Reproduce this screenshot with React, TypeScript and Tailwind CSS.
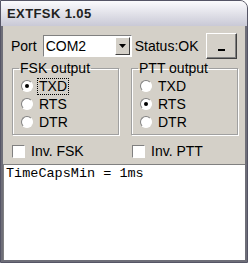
import React from "react";

function Radio({ checked, label, focused }: { checked?: boolean; label: string; focused?: boolean }) {
  return (
    <div className="flex h-[18px] items-center">
      <span className="relative ml-[7px] h-[12px] w-[12px] rounded-full border border-t-[#808080] border-l-[#808080] border-r-white border-b-white bg-white">
        {checked && <span className="absolute left-[3px] top-[3px] h-[4px] w-[4px] rounded-full bg-black" />}
      </span>
      <span
        className={
          "ml-[4px] px-[1px] leading-[15px] " +
          (focused ? "border border-dotted border-black" : "border border-transparent")
        }
      >
        {label}
      </span>
    </div>
  );
}

function Group({ title, selected, focusFirst }: { title: string; selected: number; focusFirst?: boolean }) {
  const items = ["TXD", "RTS", "DTR"];
  return (
    <fieldset className="h-[74px] w-[107px] border border-[#a0a0a0] px-[1px] pb-[2px] pt-0 shadow-[inset_1px_1px_0_white,1px_1px_0_white]">
      <legend className="ml-[5px] px-[1px] leading-[14px]">{title}</legend>
      <div className="mt-[2px]">
        {items.map((it, i) => (
          <Radio key={it} label={it} checked={i === selected} focused={focusFirst && i === 0} />
        ))}
      </div>
    </fieldset>
  );
}

function Check({ label }: { label: string }) {
  return (
    <div className="flex items-center">
      <span className="h-[13px] w-[13px] border border-t-[#808080] border-l-[#808080] border-r-white border-b-white bg-white" />
      <span className="ml-[6px]">{label}</span>
    </div>
  );
}

export default function App() {
  return (
    <div
      className="h-[263px] w-[248px] overflow-hidden rounded-tr-[8px] border border-[#555566] bg-[#d4d0c8] text-[14px] text-black"
      style={{ fontFamily: '"Liberation Sans", Arial, sans-serif' }}
    >
      <div className="flex h-[25px] items-center bg-gradient-to-b from-[#fbfbfd] to-[#c9c9d6] pl-[6px] text-[13px] font-bold tracking-[0.4px] text-[#222]">
        EXTFSK 1.05
      </div>
      <div className="flex h-[236px] flex-col border-x-2 border-b-2 border-[#6e6e78]">
        <div className="flex items-center pl-[8px] pt-[7px]">
          <span>Port</span>
          <div className="ml-[6px] flex h-[22px] w-[89px] items-center border border-t-[#808080] border-l-[#808080] border-r-white border-b-white bg-white">
            <span className="flex-1 pl-[2px]">COM2</span>
            <span className="mr-[1px] flex h-[18px] w-[15px] items-center justify-center border border-t-white border-l-white border-r-[#404040] border-b-[#404040] bg-[#d4d0c8]">
              <svg width="7" height="4" viewBox="0 0 7 4">
                <path d="M0 0h7L3.5 4z" fill="#000" />
              </svg>
            </span>
          </div>
          <span className="ml-[3px]">Status:OK</span>
          <span className="ml-[7px] flex h-[26px] w-[31px] items-center justify-center border border-t-white border-l-white border-r-[#404040] border-b-[#404040] pt-[8px] shadow-[inset_-1px_-1px_0_#808080]">
            <span className="h-[1.5px] w-[7px] bg-black" />
          </span>
        </div>
        <div className="mt-[2px] flex gap-[12px] pl-[9px]">
          <Group title="FSK output" selected={0} focusFirst />
          <Group title="PTT output" selected={1} />
        </div>
        <div className="flex h-[29px] items-center pl-[9px] pt-[3px]">
          <div className="w-[120px]">
            <Check label="Inv. FSK" />
          </div>
          <Check label="Inv. PTT" />
        </div>
        <div className="flex-1 border-t border-l border-t-[#808080] border-l-[#808080] bg-white pl-[2px] pt-[1px] text-[13.5px] leading-[16px]"
          style={{ fontFamily: '"Liberation Mono", "Courier New", monospace' }}
        >
          TimeCapsMin = 1ms
        </div>
      </div>
    </div>
  );
}
